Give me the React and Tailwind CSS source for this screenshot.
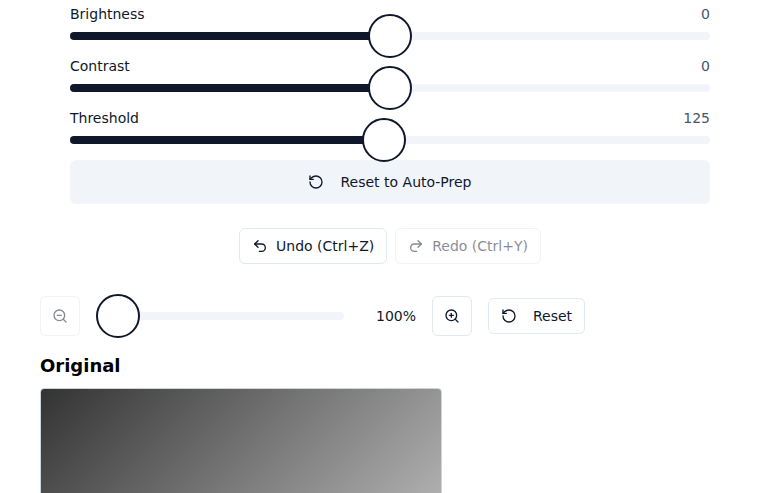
import { Undo2, Redo2, RotateCcw, ZoomIn, ZoomOut } from 'lucide-react';

// Track with a filled range and a big round thumb on top
function Slider({ percent, className = '' }) {
  return (
    <div className={`relative h-2 rounded-full bg-slate-100 ${className}`}>
      <div className="h-full rounded-full bg-slate-900" style={{ width: `${percent}%` }} />
      <div
        className="absolute top-1/2 size-11 -translate-x-1/2 -translate-y-1/2 rounded-full border-2 border-slate-900 bg-white"
        style={{ left: `calc(${percent}% + ${22 - percent * 0.44}px)` }}
      />
    </div>
  );
}

function AdjustRow({ label, value, percent }) {
  return (
    <div>
      <div className="flex h-5 items-center justify-between text-sm">
        <span className="text-slate-900">{label}</span>
        <span className="text-slate-600">{value}</span>
      </div>
      <Slider percent={percent} className="mt-2" />
    </div>
  );
}

export default function App() {
  return (
    <div className="h-[493px] overflow-hidden bg-white px-10 pt-1 font-['DejaVu_Sans',sans-serif] text-slate-900">
      <div className="px-[30px]">
        <div className="flex flex-col gap-4">
          <AdjustRow label="Brightness" value="0" percent={50} />
          <AdjustRow label="Contrast" value="0" percent={50} />
          <AdjustRow label="Threshold" value="125" percent={49} />
          <button className="flex h-11 items-center justify-center gap-4 rounded-md bg-slate-100 text-sm">
            <RotateCcw size={16} />
            Reset to Auto-Prep
          </button>
        </div>

        <div className="mt-6 flex justify-center gap-2">
          <button className="flex h-9 items-center gap-2 rounded-md border border-slate-200 bg-white px-3 text-sm">
            <Undo2 size={16} />
            Undo (Ctrl+Z)
          </button>
          <button disabled className="flex h-9 items-center gap-2 rounded-md border border-slate-200 bg-white px-3 text-sm opacity-50">
            <Redo2 size={16} />
            Redo (Ctrl+Y)
          </button>
        </div>
      </div>

      <div className="mt-8 flex items-center gap-4">
        <button disabled className="flex size-10 items-center justify-center rounded-md border border-slate-200 bg-white opacity-50">
          <ZoomOut size={16} />
        </button>
        <Slider percent={0} className="w-[248px]" />
        <span className="w-14 text-right text-sm">100%</span>
        <button className="flex size-10 items-center justify-center rounded-md border border-slate-200 bg-white">
          <ZoomIn size={16} />
        </button>
        <button className="flex h-9 items-center gap-4 rounded-md border border-slate-200 bg-white px-3 text-sm">
          <RotateCcw size={16} />
          Reset
        </button>
      </div>

      <h3 className="mt-4 text-lg font-bold leading-7 text-black">Original</h3>
      <div className="mt-2 h-[227px] w-[402px] rounded-sm border border-slate-300 bg-[linear-gradient(135deg,#333333,#cccccc)]" />
    </div>
  );
}
